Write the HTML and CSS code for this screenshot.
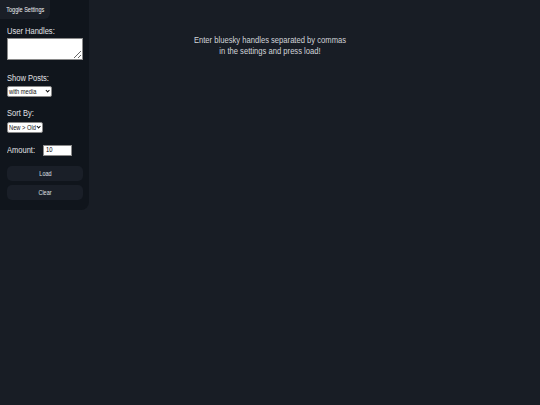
FILE: index.html
```html
<!DOCTYPE html>
<html>
<head>
<meta charset="utf-8">
<link rel="stylesheet" href="styles.css">
</head>
<body>
<aside class="sidebar">
  <button class="toggle"><span class="nar nar-c">Toggle Settings</span></button>
  <div class="settings">
    <label class="lbl"><span class="nar">User Handles:</span></label>
    <textarea class="handles"></textarea>
    <label class="lbl lbl-posts"><span class="nar">Show Posts:</span></label>
    <span class="sel sel-media"><span class="nar">with media</span></span>
    <label class="lbl lbl-sort"><span class="nar">Sort By:</span></label>
    <span class="sel sel-sort"><span class="nar">New &gt; Old</span></span>
    <div class="amount-row">
      <label class="lbl"><span class="nar">Amount:</span></label>
      <span class="amount"><span class="nar">10</span></span>
    </div>
    <button class="act act-load"><span class="nar nar-c">Load</span></button>
    <button class="act act-clear"><span class="nar nar-c">Clear</span></button>
  </div>
</aside>
<main class="main">
  <p class="hint">Enter bluesky handles separated by commas<br>in the settings and press load!</p>
</main>
</body>
</html>
```
FILE: styles.css
```css
html, body {
  margin: 0;
  padding: 0;
  height: 100%;
}
body {
  background: #181d25;
  font-family: "Liberation Sans", Arial, sans-serif;
  color: #d4d6da;
}
.nar {
  display: inline-block;
  transform: scaleX(0.82);
  transform-origin: left center;
  white-space: nowrap;
}
.nar-c {
  transform-origin: center center;
}
.sidebar {
  position: absolute;
  top: 0;
  left: 0;
  width: 89px;
  height: 210px;
  background: #10151c;
  border-bottom-right-radius: 8px;
  display: flex;
  flex-direction: column;
  align-items: flex-start;
}
.toggle {
  background: #1a1f27;
  color: #eeeff1;
  border: none;
  font-family: inherit;
  font-size: 6.8px;
  padding: 0 0 0 1px;
  width: 50px;
  height: 19px;
  border-bottom-right-radius: 6px;
}
.settings {
  display: flex;
  flex-direction: column;
  align-items: flex-start;
  padding: 7px 7px 0 7px;
  width: 76px;
}
.lbl {
  font-size: 9.2px;
  color: #e0e2e6;
  line-height: 11px;
  height: 11px;
}
.handles {
  box-sizing: border-box;
  display: block;
  width: 76px;
  height: 22px;
  margin: 1px 0 0 0;
  border: 1px solid #8a8a8a;
  background: #fff;
  padding: 0;
  resize: vertical;
}
.lbl-posts { margin-top: 13px; }
.lbl-sort { margin-top: 11px; }
.sel {
  position: relative;
  box-sizing: border-box;
  display: block;
  font-size: 7px;
  line-height: 9px;
  height: 11px;
  padding: 0 0 0 1px;
  border: 1px solid #8a8a8a;
  background: #fff;
  color: #111;
  border-radius: 2px;
  overflow: hidden;
}
.sel::after {
  content: "";
  position: absolute;
  right: 1.5px;
  top: 1.5px;
  width: 2.3px;
  height: 2.3px;
  border-right: 1.4px solid #111;
  border-bottom: 1.4px solid #111;
  transform: rotate(45deg);
}
.sel-media { width: 45px; margin-top: 2px; }
.sel-sort { width: 36px; margin-top: 3px; }
.amount-row {
  display: flex;
  align-items: center;
  gap: 2px;
  margin-top: 11px;
  height: 12px;
}
.amount {
  box-sizing: border-box;
  display: block;
  width: 29px;
  height: 11px;
  font-size: 7.1px;
  line-height: 9px;
  padding: 0 2px;
  border: 1px solid #8a8a8a;
  background: #fff;
  color: #000;
}
.act {
  width: 76px;
  height: 15px;
  padding: 0;
  background: #1a1f28;
  color: #dfe1e4;
  border: none;
  border-radius: 5px;
  font-family: inherit;
  font-size: 6.7px;
}
.act-load { margin-top: 10px; }
.act-clear { margin-top: 4px; }
.main {
  padding-top: 35px;
}
.hint {
  margin: 0;
  text-align: center;
  font-size: 9.3px;
  line-height: 11px;
  color: #d2d5da;
  transform: scaleX(0.82);
}
```
